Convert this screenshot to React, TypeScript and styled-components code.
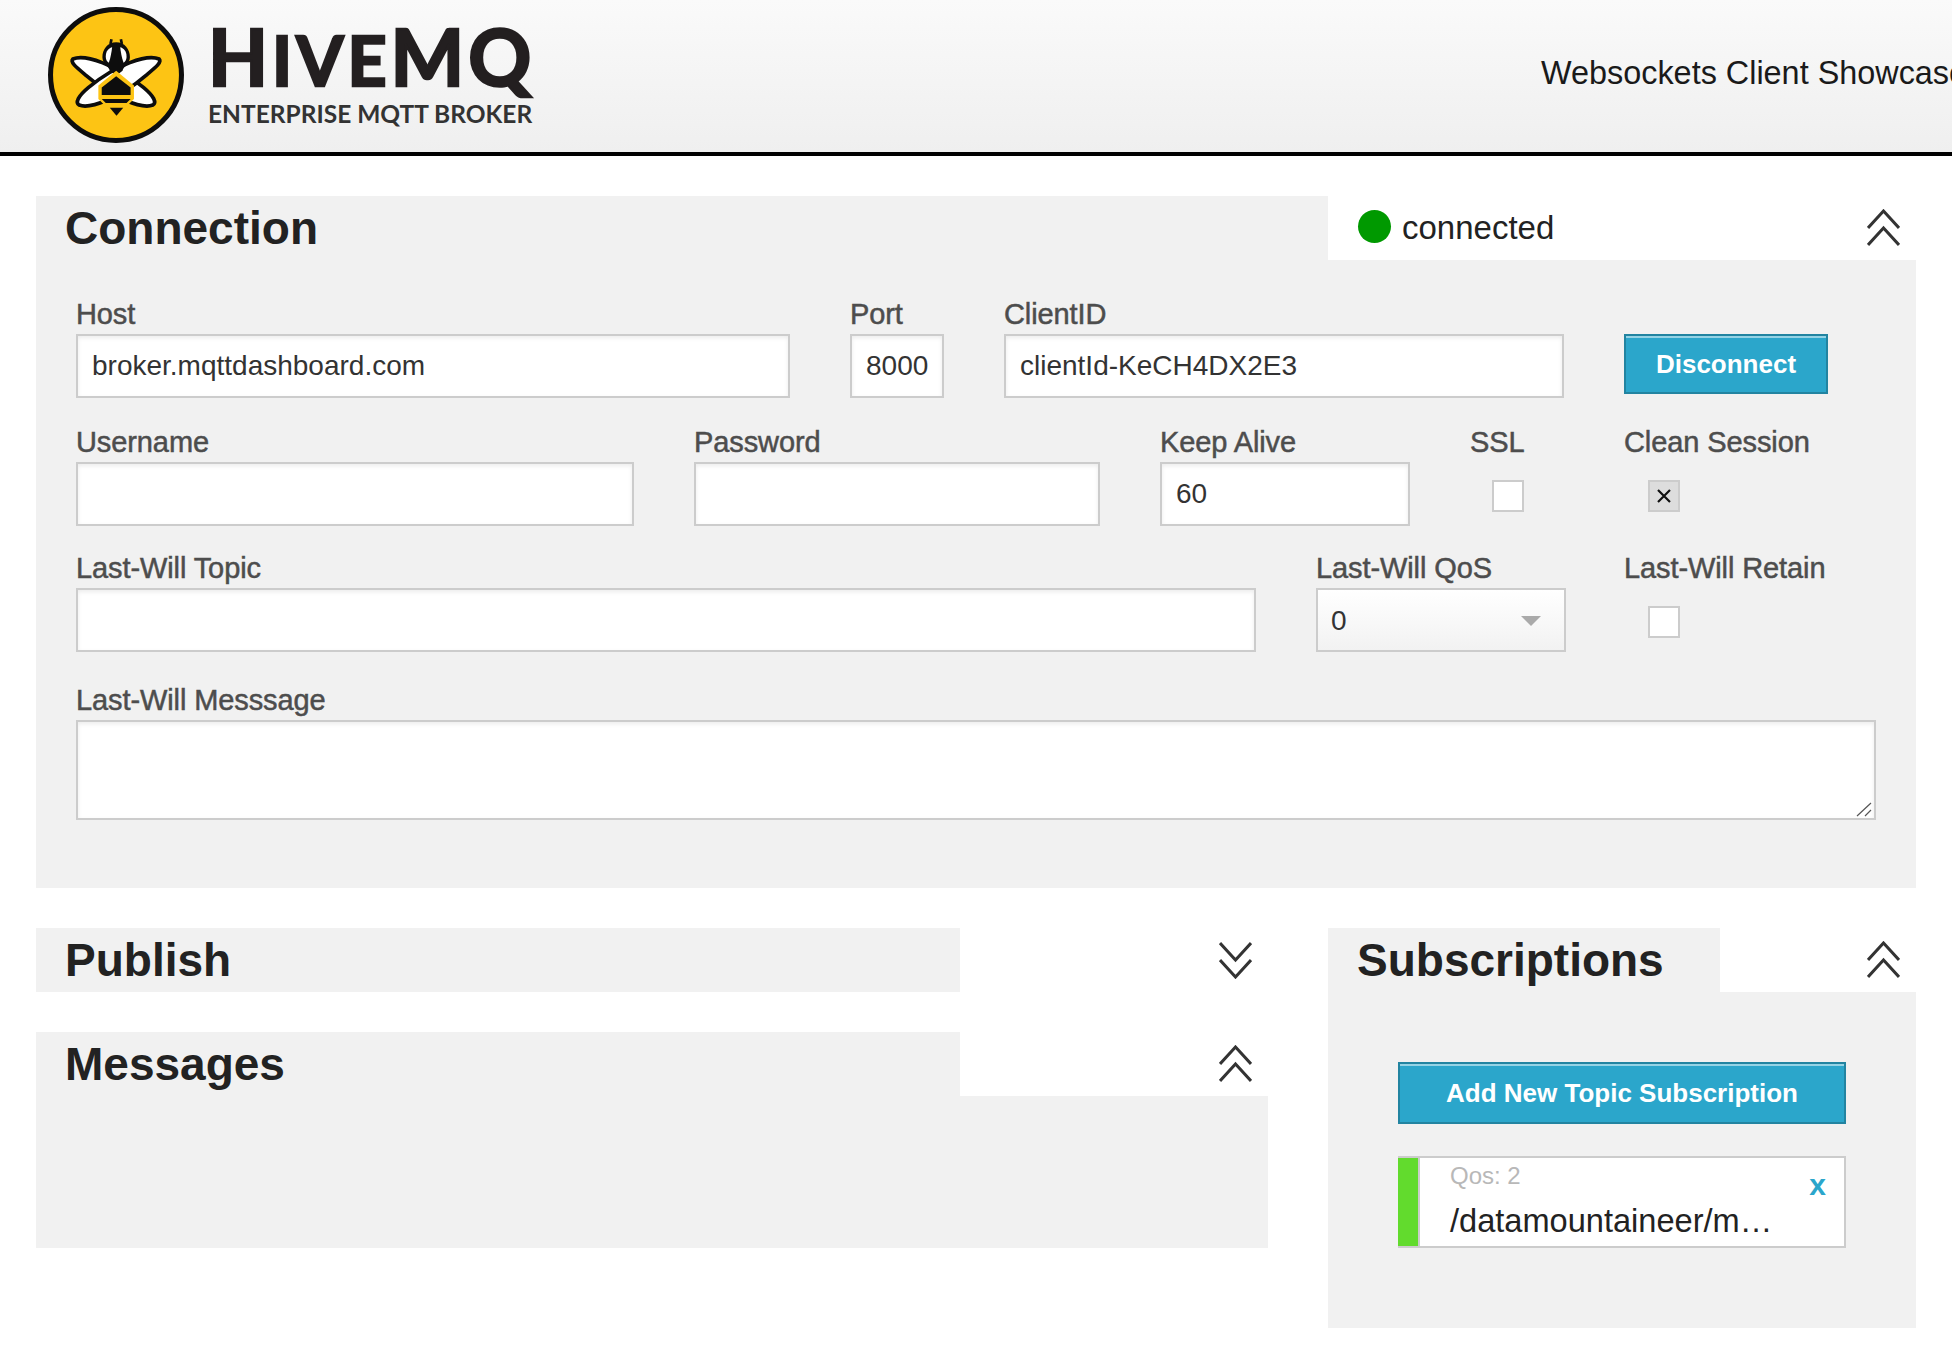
import React from "react";
import styled, { createGlobalStyle } from "styled-components";

const GlobalStyle = createGlobalStyle`
    html, body {
        margin: 0;
        background: #fff;
        overflow: hidden;
    }

    * {
        box-sizing: border-box;
    }
`;

const Page = styled.div`
    width: 1952px;
    height: 1362px;
    overflow: hidden;
    font-family: "Liberation Sans", Arial, sans-serif;
`;

const Header = styled.header`
    height: 156px;
    display: flex;
    align-items: flex-start;
    overflow: hidden;
    background: linear-gradient(to bottom, #fafafa, #efefef);
    border-bottom: 4px solid #000;
`;

const Brand = styled.div`
    flex: 0 0 1541px;
    display: flex;
    padding: 7px 0 0 48px;
`;

const BrandText = styled.div`
    margin-left: 24px;
    font-family: Lato, "Liberation Sans", sans-serif;
    color: #231f20;
`;

const Wordmark = styled.div`
    display: flex;
    align-items: baseline;
    height: 92px;
    line-height: 98px;
    font-weight: 700;
    letter-spacing: 4px;
    white-space: nowrap;
    -webkit-text-stroke: 2.5px #231f20;
`;

const WordPart = styled.span<{ $size: number }>`
    font-size: ${(p) => p.$size}px;
`;

const Tagline = styled.div`
    font-size: 24.5px;
    line-height: 30px;
    font-weight: 700;
    white-space: nowrap;
    color: #333;
`;

const HeaderTitle = styled.div`
    flex: none;
    margin-top: 54px;
    font-size: 32.4px;
    line-height: 38px;
    white-space: nowrap;
    color: #1a1a1a;
`;

const Main = styled.main`
    padding: 40px 36px 0;
`;

const Columns = styled.div`
    display: grid;
    grid-template-columns: 1232px 588px;
    column-gap: 60px;
    margin-top: 40px;
    align-items: start;
`;

const Stack = styled.div`
    display: flex;
    flex-direction: column;
    gap: 40px;
`;

const PanelHead = styled.div`
    display: flex;
    height: 64px;
`;

const Tab = styled.div<{ $width: number }>`
    flex: 0 0 ${(p) => p.$width}px;
    padding-left: 29px;
    background: #f1f1f1;
`;

const Title = styled.h3`
    margin: 0;
    font-size: 46px;
    line-height: 64px;
    font-weight: 700;
    color: #222;
`;

const HeadAside = styled.div`
    flex: 1;
    display: flex;
    align-items: center;
    justify-content: flex-end;
    padding-right: 16px;
    background: #fff;
`;

const Status = styled.div`
    display: flex;
    align-items: center;
    margin: 0 auto 0 30px;
    font-size: 33px;
    color: #222;
`;

const StatusDot = styled.span`
    width: 33px;
    height: 33px;
    margin: -3px 11px 0 0;
    border-radius: 50%;
    background: #090;
`;

const PanelBody = styled.div<{ $height?: number }>`
    background: #f1f1f1;
    ${(p) => (p.$height ? `height: ${p.$height}px;` : "")}
`;

const ConnectionForm = styled.form`
    padding: 36px 40px 68px;
`;

const Row = styled.div<{ $top?: number }>`
    display: flex;
    gap: 60px;
    margin-top: ${(p) => p.$top ?? 0}px;
`;

const Field = styled.div<{ $width: number }>`
    flex: 0 0 ${(p) => p.$width}px;
    min-width: 0;
`;

const Label = styled.label`
    display: block;
    height: 38px;
    font-size: 29px;
    line-height: 36px;
    letter-spacing: -0.1px;
    color: #4d4d4d;
    white-space: nowrap;
    -webkit-text-stroke: 0.5px #4d4d4d;
`;

const TextInput = styled.input`
    display: block;
    width: 100%;
    height: 64px;
    padding: 0 14px;
    border: 2px solid #ccc;
    border-radius: 0;
    outline: none;
    background: #fff;
    box-shadow: inset 0 2px 4px rgba(0, 0, 0, 0.08);
    font-family: inherit;
    font-size: 28px;
    color: #333;
`;

const MessageWrap = styled.div`
    position: relative;

    svg {
        position: absolute;
        right: 4px;
        bottom: 3px;
        pointer-events: none;
    }
`;

const MessageArea = styled.textarea`
    display: block;
    width: 100%;
    height: 100px;
    padding: 14px;
    border: 2px solid #ccc;
    border-radius: 0;
    outline: none;
    background: #fff;
    box-shadow: inset 0 2px 4px rgba(0, 0, 0, 0.08);
    font-family: inherit;
    font-size: 28px;
    resize: none;
`;

const SelectWrap = styled.div`
    position: relative;
    width: 250px;

    &::after {
        content: "";
        position: absolute;
        top: 28px;
        right: 25px;
        border-left: 10px solid transparent;
        border-right: 10px solid transparent;
        border-top: 10px solid #aaa;
        pointer-events: none;
    }
`;

const Select = styled.select`
    display: block;
    width: 100%;
    height: 64px;
    padding: 0 13px;
    border: 2px solid #ccc;
    border-radius: 0;
    outline: none;
    appearance: none;
    background: linear-gradient(to bottom, #fff, #f2f2f2);
    font-family: inherit;
    font-size: 28px;
    color: #333;
`;

const CheckBox = styled.span<{ $checked?: boolean; $offset: number }>`
    display: flex;
    align-items: center;
    justify-content: center;
    width: 32px;
    height: 32px;
    margin: 18px 0 0 ${(p) => p.$offset}px;
    border: 2px solid #ccc;
    background: ${(p) => (p.$checked ? "#ddd" : "#fff")};
`;

const Button = styled.button<{ $height: number }>`
    display: block;
    width: 100%;
    height: ${(p) => p.$height}px;
    padding: 0;
    border: 2px solid #2284a1;
    border-radius: 0;
    background: #2ba6cb;
    box-shadow: inset 0 2px 0 rgba(255, 255, 255, 0.5);
    font-family: inherit;
    font-size: 26px;
    font-weight: 700;
    color: #fff;
`;

const ButtonCell = styled.div<{ $width: number }>`
    flex: 0 0 ${(p) => p.$width}px;
    padding-top: 38px;
`;

const SubscriptionBody = styled.div`
    height: 336px;
    padding: 70px 70px 0;
    background: #f1f1f1;
`;

const TopicItem = styled.div`
    display: flex;
    height: 92px;
    margin-top: 32px;
    background: #fff;
    border: 2px solid #ccc;
    border-left: 0;
`;

const TopicColor = styled.span<{ $color: string }>`
    flex: 0 0 22px;
    border-right: 2px solid #ccc;
    background: ${(p) => p.$color};
`;

const TopicInfo = styled.div`
    flex: 1;
    padding-left: 30px;
`;

const TopicQos = styled.div`
    margin-top: 4px;
    font-size: 24px;
    line-height: 28px;
    color: #b8b8b8;
`;

const TopicName = styled.div`
    margin-top: 11px;
    font-size: 32.6px;
    line-height: 40px;
    color: #222;
    white-space: nowrap;
`;

const TopicClose = styled.span`
    flex: none;
    padding: 9px 18px 0 0;
    font-size: 30px;
    line-height: 36px;
    font-weight: 700;
    color: #2ba6cb;
`;

const Chevrons = ({ down }: { down?: boolean }) => (
    <svg width="33" height="38" viewBox="0 0 33 38" fill="none" stroke="#333" strokeWidth="3" style={down ? { transform: "scaleY(-1)" } : undefined}>
        <path d="M1 19L16.5 2L32 19" />
        <path d="M1 36L16.5 19L32 36" />
    </svg>
);

const Logo = () => (
    <svg width="136" height="136" viewBox="0 0 405 405">
        <circle cx="202.5" cy="202.5" r="195" fill="#fdc414" stroke="#0d0d0d" strokeWidth="15" />
        <path d="M74 155C110 140 200 170 285 240C315 265 325 285 312 292C280 305 190 270 115 205C85 180 65 165 74 155Z" fill="#fff" stroke="#0d0d0d" strokeWidth="11" strokeLinejoin="round" />
        <path d="M331 155C295 140 205 170 120 240C90 265 80 285 93 292C125 305 215 270 290 205C320 180 340 165 331 155Z" fill="#fff" stroke="#0d0d0d" strokeWidth="11" strokeLinejoin="round" />
        <path d="M186 110L189 96M220 110L217 96" stroke="#0d0d0d" strokeWidth="8" />
        <path d="M203 105C228 105 244 125 244 150C244 170 224 178 222 190L203 205L184 190C182 178 162 170 162 150C162 125 178 105 203 105Z" fill="#0d0d0d" />
        <path d="M172 148C172 130 182 122 191 120C189 135 187 150 181 166C176 163 172 157 172 148Z" fill="#fff" />
        <path d="M234 148C234 130 224 122 215 120C217 135 219 150 225 166C230 163 234 157 234 148Z" fill="#fff" />
        <path d="M203 190L256 234V274L232 298H174L150 274V234Z" fill="#fdc414" />
        <path d="M203 206L246 240V262H160V240Z" fill="#0d0d0d" />
        <path d="M160 274H246L234 286H172Z" fill="#0d0d0d" />
        <path d="M184 300H224L204 324Z" fill="#0d0d0d" />
    </svg>
);

export default function App() {
    return (
        <Page>
            <GlobalStyle />
            <Header>
                <Brand>
                    <Logo />
                    <BrandText>
                        <Wordmark>
                            <WordPart $size={78}>H</WordPart>
                            <WordPart $size={68}>IVE</WordPart>
                            <WordPart $size={78}>MQ</WordPart>
                        </Wordmark>
                        <Tagline>ENTERPRISE MQTT BROKER</Tagline>
                    </BrandText>
                </Brand>
                <HeaderTitle>Websockets Client Showcase</HeaderTitle>
            </Header>
            <Main>
                <section>
                    <PanelHead>
                        <Tab $width={1292}>
                            <Title>Connection</Title>
                        </Tab>
                        <HeadAside>
                            <Status>
                                <StatusDot />
                                connected
                            </Status>
                            <Chevrons />
                        </HeadAside>
                    </PanelHead>
                    <PanelBody>
                        <ConnectionForm>
                            <Row>
                                <Field $width={714}>
                                    <Label>Host</Label>
                                    <TextInput readOnly value="broker.mqttdashboard.com" />
                                </Field>
                                <Field $width={94}>
                                    <Label>Port</Label>
                                    <TextInput readOnly value="8000" />
                                </Field>
                                <Field $width={560}>
                                    <Label>ClientID</Label>
                                    <TextInput readOnly value="clientId-KeCH4DX2E3" />
                                </Field>
                                <ButtonCell $width={204}>
                                    <Button type="button" $height={60}>Disconnect</Button>
                                </ButtonCell>
                            </Row>
                            <Row $top={26}>
                                <Field $width={558}>
                                    <Label>Username</Label>
                                    <TextInput readOnly value="" />
                                </Field>
                                <Field $width={406}>
                                    <Label>Password</Label>
                                    <TextInput readOnly value="" />
                                </Field>
                                <Field $width={250}>
                                    <Label>Keep Alive</Label>
                                    <TextInput readOnly value="60" />
                                </Field>
                                <Field $width={94}>
                                    <Label>SSL</Label>
                                    <CheckBox $offset={22} />
                                </Field>
                                <Field $width={204}>
                                    <Label>Clean Session</Label>
                                    <CheckBox $offset={24} $checked>
                                        <svg width="16" height="16" viewBox="0 0 16 16" stroke="#111" strokeWidth="2.2">
                                            <path d="M2 2L14 14M14 2L2 14" />
                                        </svg>
                                    </CheckBox>
                                </Field>
                            </Row>
                            <Row $top={24}>
                                <Field $width={1180}>
                                    <Label>Last-Will Topic</Label>
                                    <TextInput readOnly value="" />
                                </Field>
                                <Field $width={248}>
                                    <Label>Last-Will QoS</Label>
                                    <SelectWrap>
                                        <Select defaultValue="0">
                                            <option value="0">0</option>
                                            <option value="1">1</option>
                                            <option value="2">2</option>
                                        </Select>
                                    </SelectWrap>
                                </Field>
                                <Field $width={204}>
                                    <Label>Last-Will Retain</Label>
                                    <CheckBox $offset={24} />
                                </Field>
                            </Row>
                            <Row $top={30}>
                                <Field $width={1800}>
                                    <Label>Last-Will Messsage</Label>
                                    <MessageWrap>
                                        <MessageArea readOnly value="" />
                                        <svg width="16" height="15" viewBox="0 0 16 15" stroke="#555" strokeWidth="1.2">
                                            <path d="M1 14L15 1M9 14L15 8" />
                                        </svg>
                                    </MessageWrap>
                                </Field>
                            </Row>
                        </ConnectionForm>
                    </PanelBody>
                </section>
                <Columns>
                    <Stack>
                        <section>
                            <PanelHead>
                                <Tab $width={924}>
                                    <Title>Publish</Title>
                                </Tab>
                                <HeadAside>
                                    <Chevrons down />
                                </HeadAside>
                            </PanelHead>
                        </section>
                        <section>
                            <PanelHead>
                                <Tab $width={924}>
                                    <Title>Messages</Title>
                                </Tab>
                                <HeadAside>
                                    <Chevrons />
                                </HeadAside>
                            </PanelHead>
                            <PanelBody $height={152} />
                        </section>
                    </Stack>
                    <section>
                        <PanelHead>
                            <Tab $width={392}>
                                <Title>Subscriptions</Title>
                            </Tab>
                            <HeadAside>
                                <Chevrons />
                            </HeadAside>
                        </PanelHead>
                        <SubscriptionBody>
                            <Button type="button" $height={62}>Add New Topic Subscription</Button>
                            <TopicItem>
                                <TopicColor $color="#62db2d" />
                                <TopicInfo>
                                    <TopicQos>Qos: 2</TopicQos>
                                    <TopicName>/datamountaineer/m…</TopicName>
                                </TopicInfo>
                                <TopicClose>x</TopicClose>
                            </TopicItem>
                        </SubscriptionBody>
                    </section>
                </Columns>
            </Main>
        </Page>
    );
}
